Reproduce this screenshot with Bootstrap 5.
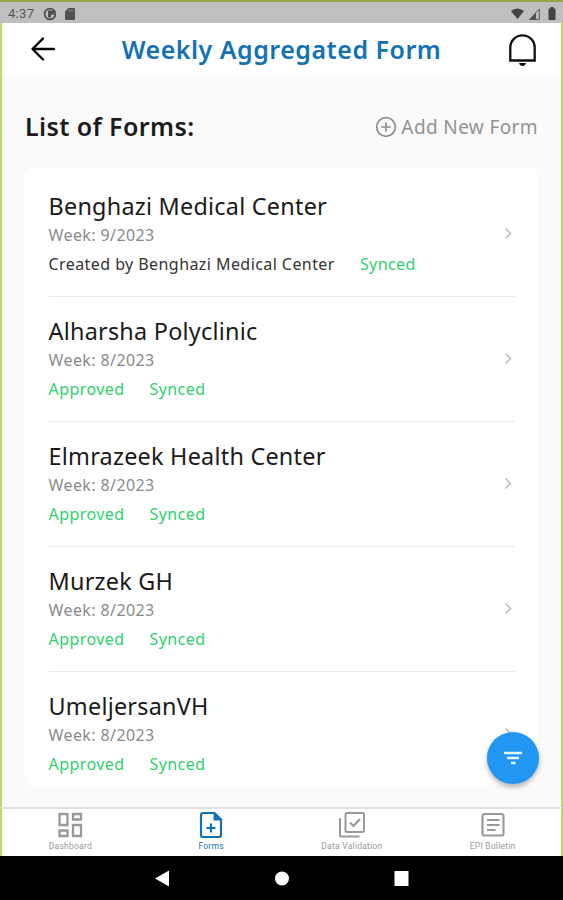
<!DOCTYPE html>
<html lang="en">
<head>
<meta charset="utf-8">
<meta name="viewport" content="width=device-width, initial-scale=1">
<title>Weekly Aggregated Form</title>
<link rel="stylesheet" href="https://cdn.jsdelivr.net/npm/bootstrap@5.3.0/dist/css/bootstrap.min.css">
<style>
body{font-family:"Noto Sans",sans-serif;background:#000;color:#111;overflow:hidden}
svg{display:block;flex:none}
.screen{height:900px;width:563px}
.app{height:856px;background:#fafafa;border-left:2px solid #b9dc68;border-right:2px solid #b9dc68}
.status{height:23px;margin:0 -2px;padding:2px 7px 0 8px;background:#bfbfbf;border-top:2px solid #94a64c;color:#555;font:13px/19px Roboto,sans-serif;letter-spacing:.3px}
.topbar{height:53px;background:#fff;padding:0 24px 0 26px}
.topbar h1{font-size:25px;font-weight:600;color:#1572b0;letter-spacing:.5px;line-height:52px;padding-bottom:1px}
.heading{padding:0 23px;height:92px;padding-top:10px}
.heading h2{font-size:25px;font-weight:600;color:#1b1b1b;letter-spacing:.4px;padding-bottom:2px}
.add{font-size:19px;color:#929292;gap:4px;letter-spacing:.38px}
.forms{margin:0 23px 0 22px;height:617px;background:#fff;border-radius:8px;padding:4px 23px 0 24.5px;overflow:hidden}
.entry{height:125px;border-bottom:1px solid #ebebeb;padding:16px 2px 0 0}
.entry:last-child{border:0}
.name{font-size:23.4px;line-height:36px;margin-bottom:1px;letter-spacing:.24px;color:#1a1a1a}
.week{font-size:16px;line-height:20px;color:#8a8a8a;letter-spacing:.4px}
.state{font-size:16px;line-height:24px;margin-top:7px;gap:25px;color:#2fd06d;letter-spacing:.43px}
.by{color:#333}
.tabs{height:49px;margin:auto -2px 0;background:#fff;border:2px solid #b9dc68;border-top-color:#e0e0e0;border-bottom:0}
.tab-item{width:25%;color:#999;font:8.5px/10px Roboto,sans-serif;letter-spacing:.25px;padding-top:2px;gap:2px}
.tab-item.current{color:#1572b0}
.tab-item:nth-child(1){padding-right:3px}
.tab-item:nth-child(2){padding-right:1px}
.tab-item:nth-child(3){padding-left:1px}
.tab-item:nth-child(4){padding-left:3px}
.fab{right:24px;top:732px;width:52px;height:52px;background:#2196f3;box-shadow:0 3px 5px rgba(0,0,0,.3)}
.sys{height:44px}
</style>
</head>
<body>
<div class="screen position-relative">
<div class="app d-flex flex-column">
  <div class="status d-flex align-items-center">
    <span>4:37</span>
    <svg class="ms-2" width="14" height="14" viewBox="0 0 14 14"><circle cx="8" cy="7" r="5.400" fill="none" stroke="#505050" stroke-width="1.800"/><path d="M6 3.500h6v4.200H9V10.500H6z" fill="#505050"/></svg>
    <svg class="ms-2" width="12" height="14" viewBox="0 0 12 14"><path d="M4.500 1H10q1 0 1 1v10q0 1-1 1H2q-1 0-1-1V4.500z" fill="#505050"/><path d="M5 2.500v2M7 2.500v2M9 2.500v2" stroke="#999" stroke-width=".8"/></svg>
    <svg class="ms-auto" width="15" height="13" viewBox="0 0 15 13"><path d="M1 4Q7.500-1 14 4L7.500 12z" fill="#454545"/></svg>
    <svg class="ms-1" width="11" height="12" viewBox="0 0 11 12"><path d="M.8 11.400H10.300V1z" fill="none" stroke="#555"/><path d="M0 12L7 4.500V12z" fill="#505050"/></svg>
    <svg class="ms-2" width="8" height="13" viewBox="0 0 8 13"><path d="M2.500 0h3v1.500H7.500V13H.5V1.500h2z" fill="#454545"/></svg>
  </div>
  <header class="topbar d-flex align-items-center justify-content-between">
    <svg width="28" height="28" viewBox="0 0 28 28" fill="none" stroke="#000" stroke-width="2.300" stroke-linecap="round" stroke-linejoin="round"><path d="M26 13H4.500M15 2.500 4.500 13 15 23.500"/></svg>
    <h1 class="mb-0">Weekly Aggregated Form</h1>
    <svg width="30" height="34" viewBox="0 0 30 34"><path d="M3.300 27.500V14.500a12.200 12.200 0 0 1 24.400 0v13z" fill="none" stroke="#111" stroke-width="2.300"/><path d="M12 30h7q-.7 3-3.500 3t-3.500-3z" fill="#111"/></svg>
  </header>
  <div class="heading d-flex align-items-center justify-content-between">
    <h2 class="mb-0">List of Forms:</h2>
    <div class="add d-flex align-items-center">
      <svg width="22" height="22" viewBox="0 0 22 22" fill="none" stroke="#8e8e8e" stroke-width="1.700"><circle cx="11" cy="11" r="9.300"/><path d="M11 6.200v9.600M6.200 11h9.600"/></svg>
      <span>Add New Form</span>
    </div>
  </div>
  <main class="forms">
    <div class="entry d-flex align-items-start justify-content-between"><div><div class="name">Benghazi Medical Center</div><div class="week">Week: 9/2023</div><div class="state d-flex"><span class="by">Created by Benghazi Medical Center</span><span>Synced</span></div></div><svg width="10" height="88" viewBox="0 0 10 88"><path d="M2.500 40.500 7.500 45.500 2.500 50.500" fill="none" stroke="#bbb" stroke-width="1.500"/></svg></div>
    <div class="entry d-flex align-items-start justify-content-between"><div><div class="name">Alharsha Polyclinic</div><div class="week">Week: 8/2023</div><div class="state d-flex"><span>Approved</span><span>Synced</span></div></div><svg width="10" height="88" viewBox="0 0 10 88"><path d="M2.500 40.500 7.500 45.500 2.500 50.500" fill="none" stroke="#bbb" stroke-width="1.500"/></svg></div>
    <div class="entry d-flex align-items-start justify-content-between"><div><div class="name">Elmrazeek Health Center</div><div class="week">Week: 8/2023</div><div class="state d-flex"><span>Approved</span><span>Synced</span></div></div><svg width="10" height="88" viewBox="0 0 10 88"><path d="M2.500 40.500 7.500 45.500 2.500 50.500" fill="none" stroke="#bbb" stroke-width="1.500"/></svg></div>
    <div class="entry d-flex align-items-start justify-content-between"><div><div class="name">Murzek GH</div><div class="week">Week: 8/2023</div><div class="state d-flex"><span>Approved</span><span>Synced</span></div></div><svg width="10" height="88" viewBox="0 0 10 88"><path d="M2.500 40.500 7.500 45.500 2.500 50.500" fill="none" stroke="#bbb" stroke-width="1.500"/></svg></div>
    <div class="entry d-flex align-items-start justify-content-between"><div><div class="name">UmeljersanVH</div><div class="week">Week: 8/2023</div><div class="state d-flex"><span>Approved</span><span>Synced</span></div></div><svg width="10" height="88" viewBox="0 0 10 88"><path d="M2.500 40.500 7.500 45.500 2.500 50.500" fill="none" stroke="#bbb" stroke-width="1.500"/></svg></div>
  </main>
  <nav class="tabs d-flex">
    <div class="tab-item d-flex flex-column align-items-center"><svg width="28" height="28" viewBox="0 0 28 28" fill="none" stroke="#999" stroke-width="2.300"><path d="M3.500 3h8v11h-8zM17 3h8v5.500h-8zM17 14h8v11h-8zM3.500 19.500h8V25h-8z"/></svg><span>Dashboard</span></div>
    <div class="tab-item current d-flex flex-column align-items-center"><svg width="28" height="28" viewBox="0 0 28 28" fill="none" stroke="#1572b0" stroke-width="2.200"><path d="M6 2h11.500l6.500 6.500V24q0 2-2 2H6q-2 0-2-2V4q0-2 2-2zM14 12.500v9M9.500 17h9"/><path d="M17 2v7h7z" fill="#1572b0" stroke-width="1"/></svg><span>Forms</span></div>
    <div class="tab-item d-flex flex-column align-items-center"><svg width="28" height="28" viewBox="0 0 28 28" fill="none" stroke="#999" stroke-width="2"><rect x="7.500" y="2" width="18.500" height="19" rx="1.500"/><path d="M2 7v17q0 1.500 1.500 1.500h18M12 11.500l3.500 3.500L22 8"/></svg><span>Data Validation</span></div>
    <div class="tab-item d-flex flex-column align-items-center"><svg width="28" height="28" viewBox="0 0 28 28" fill="none" stroke="#999" stroke-width="2.200"><rect x="3.500" y="3" width="21" height="21.500" rx="2"/><path d="M8 9h12.500M8 14h12.500M8 19h8.500"/></svg><span>EPI Bulletin</span></div>
  </nav>
</div>
<div class="fab position-absolute rounded-circle d-flex align-items-center justify-content-center">
  <svg width="20" height="14" viewBox="0 0 20 14"><path d="M1 2h18M4 7h12M8 12h4.500" stroke="#eaf5ff" stroke-width="2.600"/></svg>
</div>
<div class="sys d-flex align-items-center justify-content-center">
  <svg width="260" height="44" viewBox="0 0 260 44" fill="#fff"><path d="M3 22.500 17 14.500v16z"/><circle cx="130" cy="22.500" r="7"/><rect x="242.500" y="15" width="14" height="15"/></svg>
</div>
</div>
<script src="https://cdn.jsdelivr.net/npm/bootstrap@5.3.0/dist/js/bootstrap.bundle.min.js"></script>
</body>
</html>
